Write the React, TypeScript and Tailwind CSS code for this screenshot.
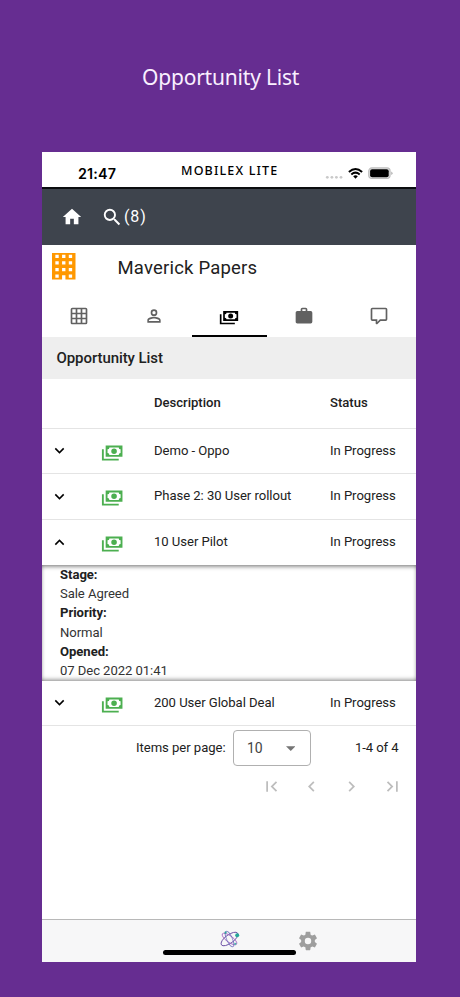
import React from "react";

const paths = {
  home: "M10,20V14H14V20H19V12H22L12,3L2,12H5V20H10Z",
  search:
    "M9.5,3A6.5,6.5 0 0,1 16,9.5C16,11.11 15.41,12.59 14.44,13.73L14.71,14H15.5L20.5,19L19,20.5L14,15.5V14.71L13.73,14.44C12.59,15.41 11.11,16 9.5,16A6.5,6.5 0 0,1 3,9.5A6.5,6.5 0 0,1 9.5,3M9.5,5C7,5 5,7 5,9.5C5,12 7,14 9.5,14C12,14 14,12 14,9.5C14,7 12,5 9.5,5Z",
  grid: "M10,4V8H14V4H10M16,4V8H20V4H16M16,10V14H20V10H16M16,16V20H20V16H16M14,20V16H10V20H14M8,20V16H4V20H8M8,14V10H4V14H8M8,8V4H4V8H8M10,14H14V10H10V14M4,2H20A2,2 0 0,1 22,4V20A2,2 0 0,1 20,22H4C2.92,22 2,21.1 2,20V4A2,2 0 0,1 4,2Z",
  account:
    "M12,4A4,4 0 0,1 16,8A4,4 0 0,1 12,12A4,4 0 0,1 8,8A4,4 0 0,1 12,4M12,6A2,2 0 0,0 10,8A2,2 0 0,0 12,10A2,2 0 0,0 14,8A2,2 0 0,0 12,6M12,13C14.67,13 20,14.33 20,17V20H4V17C4,14.33 9.33,13 12,13M12,14.9C9.03,14.9 5.9,16.36 5.9,17V18.1H18.1V17C18.1,16.36 14.97,14.9 12,14.9Z",
  cash: "M5,6H23V18H5V6M14,9A3,3 0 0,1 17,12A3,3 0 0,1 14,15A3,3 0 0,1 11,12A3,3 0 0,1 14,9M9,8A2,2 0 0,1 7,10V14A2,2 0 0,1 9,16H19A2,2 0 0,1 21,14V10A2,2 0 0,1 19,8H9M1,10H3V20H19V22H1V10Z",
  briefcase:
    "M10,2H14A2,2 0 0,1 16,4V6H20A2,2 0 0,1 22,8V19A2,2 0 0,1 20,21H4C2.89,21 2,20.1 2,19V8C2,6.89 2.89,6 4,6H8V4C8,2.89 8.89,2 10,2M14,6V4H10V6H14Z",
  comment:
    "M9,22A1,1 0 0,1 8,21V18H4A2,2 0 0,1 2,16V4C2,2.89 2.9,2 4,2H20A2,2 0 0,1 22,4V16A2,2 0 0,1 20,18H13.9L10.2,21.71C10,21.9 9.75,22 9.5,22V22H9M10,16V19.08L13.08,16H20V4H4V16H10Z",
  down: "M7.41,8.58L12,13.17L16.59,8.58L18,10L12,16L6,10L7.41,8.58Z",
  up: "M7.41,15.41L12,10.83L16.59,15.41L18,14L12,8L6,14L7.41,15.41Z",
  first: "M18.41,16.59L13.82,12L18.41,7.41L17,6L11,12L17,18L18.41,16.59M6,6H8V18H6V6Z",
  prev: "M15.41,16.58L10.83,12L15.41,7.41L14,6L8,12L14,18L15.41,16.58Z",
  next: "M8.59,16.58L13.17,12L8.59,7.41L10,6L16,12L10,18L8.59,16.58Z",
  last: "M5.59,7.41L10.18,12L5.59,16.59L7,18L13,12L7,6L5.59,7.41M16,6H18V18H16V6Z",
  cog: "M12,15.5A3.5,3.5 0 0,1 8.5,12A3.5,3.5 0 0,1 12,8.5A3.5,3.5 0 0,1 15.5,12A3.5,3.5 0 0,1 12,15.5M19.43,12.97C19.47,12.65 19.5,12.33 19.5,12C19.5,11.67 19.47,11.34 19.43,11L21.54,9.37C21.73,9.22 21.78,8.95 21.66,8.73L19.66,5.27C19.54,5.05 19.27,4.96 19.05,5.05L16.56,6.05C16.04,5.66 15.5,5.32 14.87,5.07L14.5,2.42C14.46,2.18 14.25,2 14,2H10C9.75,2 9.54,2.18 9.5,2.42L9.13,5.07C8.5,5.32 7.96,5.66 7.44,6.05L4.95,5.05C4.73,4.96 4.46,5.05 4.34,5.27L2.34,8.73C2.21,8.95 2.27,9.22 2.46,9.37L4.57,11C4.53,11.34 4.5,11.67 4.5,12C4.5,12.33 4.53,12.65 4.57,12.97L2.46,14.63C2.27,14.78 2.21,15.05 2.34,15.27L4.34,18.73C4.46,18.95 4.73,19.03 4.95,18.95L7.44,17.94C7.96,18.34 8.5,18.68 9.13,18.93L9.5,21.58C9.54,21.82 9.75,22 10,22H14C14.25,22 14.46,21.82 14.5,21.58L14.87,18.93C15.5,18.67 16.04,18.34 16.56,17.94L19.05,18.95C19.27,19.03 19.54,18.95 19.66,18.73L21.66,15.27C21.78,15.05 21.73,14.78 21.54,14.63L19.43,12.97Z",
};

type IconName = keyof typeof paths;

function Icon({ name, className }: { name: IconName; className: string }) {
  return (
    <svg viewBox="0 0 24 24" fill="currentColor" className={`shrink-0 ${className}`}>
      <path d={paths[name]} />
    </svg>
  );
}

function Building() {
  return (
    <svg viewBox="5 4 14 16" preserveAspectRatio="none" className="-mt-[2px] h-[26.5px] w-[23.5px] shrink-0 text-[#ff9800]" fill="currentColor">
      <path
        fillRule="evenodd"
        d="M5,4V20H11V17.5H13V20H19V4ZM7,5H9V7H7ZM11,5H13V7H11ZM15,5H17V7H15ZM7,9H9V11H7ZM11,9H13V11H11ZM15,9H17V11H15ZM7,13H9V15H7ZM11,13H13V15H11ZM15,13H17V15H15ZM7,17H9V19H7ZM15,17H17V19H15Z"
      />
    </svg>
  );
}

function StatusBar() {
  return (
    <div className="flex h-[35px] shrink-0 items-start bg-white text-black">
      <span className="ml-[36px] mt-[13px] w-[103px] font-['Inter'] text-[14.3px] font-semibold leading-[18px] tracking-[0.2px]">21:47</span>
      <span className="mt-[10px] w-[144px] whitespace-nowrap font-['Noto_Sans'] text-[12.5px] font-medium leading-[18px] tracking-[1.16px]">
        MOBILEX LITE
      </span>
      <svg viewBox="0 0 68 14" className="mt-[14px] h-[14px] w-[68px]">
        <g fill="#c9c9c9">
          <circle cx="2.3" cy="11.3" r="1.4" />
          <circle cx="6.9" cy="11.3" r="1.4" />
          <circle cx="11.4" cy="11.3" r="1.4" />
          <circle cx="16" cy="11.3" r="1.4" />
        </g>
        <g fill="none" stroke="#000" strokeWidth="2">
          <path d="M23.9 5.9Q30.5 .1 37.1 5.9" />
          <path d="M26.3 8.4Q30.5 4.9 34.7 8.4" />
        </g>
        <path d="M28.2 10.2Q30.5 8.5 32.8 10.2L30.5 12.7Z" />
        <rect x="43.7" y="1.9" width="21.4" height="10.6" rx="3.2" fill="#ddd" stroke="#bdbdbd" strokeWidth="1.1" />
        <rect x="45.1" y="3.2" width="18.6" height="8" rx="2" />
        <path d="M66.2 5.4Q67.6 6 67.6 7.2Q67.6 8.4 66.2 9Z" fill="#b5b5b5" />
      </svg>
    </div>
  );
}

const tabs: IconName[] = ["grid", "account", "cash", "briefcase", "comment"];

function Tabs() {
  return (
    <div className="flex h-[47px] w-[374.5px] shrink-0">
      {tabs.map((name) => (
        <div
          key={name}
          className={
            name === "cash"
              ? "flex flex-1 justify-center border-b-2 border-black pt-[16px] text-black"
              : "flex flex-1 justify-center border-b-2 border-transparent pt-[16px] text-[#616161]"
          }
        >
          <Icon name={name} className="h-5 w-5" />
        </div>
      ))}
    </div>
  );
}

function Row({ title, open }: { title: string; open?: boolean }) {
  return (
    <div
      className={
        open
          ? "flex h-[45.5px] shrink-0 items-center text-[13.1px] leading-5"
          : "flex h-[45.5px] shrink-0 items-center border-b border-[#e4e4e4] text-[13.1px] leading-5"
      }
    >
      <Icon name={open ? "up" : "down"} className="ml-[7.5px] h-[19px] w-[19px] text-black" />
      <Icon name="cash" className="ml-[32px] h-[22.4px] w-[22.4px] text-[#4caf50]" />
      <span className="ml-[31.1px] w-[176px] tracking-[-0.04px]">{title}</span>
      <span className="tracking-[-0.04px]">In Progress</span>
    </div>
  );
}

const details = [
  ["Stage:", "Sale Agreed"],
  ["Priority:", "Normal"],
  ["Opened:", "07 Dec 2022 01:41"],
];

function Details() {
  return (
    <div className="flex h-[115.5px] shrink-0 flex-col pl-[18px] text-[13.1px] leading-[19.2px] shadow-[inset_0_4px_5px_-3px_rgba(0,0,0,0.5),inset_0_-4px_5px_-3px_rgba(0,0,0,0.4),inset_0_0_4px_rgba(0,0,0,0.2)]">
      {details.map(([label, value]) => (
        <div key={label}>
          <div className="font-bold tracking-[-0.04px]">{label}</div>
          <div className="tracking-[-0.07px] text-[#333]">{value}</div>
        </div>
      ))}
    </div>
  );
}

function Pagination() {
  return (
    <div className="shrink-0">
      <div className="flex h-[44px] items-center text-[13.1px]">
        <span className="ml-[94px] w-[97px] whitespace-nowrap tracking-[-0.04px]">Items per page:</span>
        <div className="flex h-[36.5px] w-[78px] shrink-0 items-center rounded-[4px] border border-[#b0b0b0] pl-[13px]">
          <span className="w-[38.5px] text-[14px] text-[#444]">10</span>
          <svg viewBox="0 0 10 5" className="h-[5px] w-[9.5px] text-[#757575]" fill="currentColor">
            <path d="M0 0H10L5 5Z" />
          </svg>
        </div>
        <span className="ml-[44px] whitespace-nowrap tracking-[-0.1px]">1-4 of 4</span>
      </div>
      <div className="flex h-[33px] items-center gap-[19.4px] pl-[218.7px] text-[#bdbdbd]">
        <Icon name="first" className="h-[21px] w-[21px]" />
        <Icon name="prev" className="h-[21px] w-[21px]" />
        <Icon name="next" className="h-[21px] w-[21px]" />
        <Icon name="last" className="h-[21px] w-[21px]" />
      </div>
    </div>
  );
}

function Atom() {
  return (
    <svg viewBox="0 0 20 18" className="h-[18px] w-[20px]" fill="none" strokeWidth="0.9">
      <ellipse cx="9.5" cy="9" rx="10" ry="4.2" transform="rotate(-36 9.5 9)" stroke="#6b4fa3" />
      <ellipse cx="9.5" cy="9" rx="8.8" ry="3.2" transform="rotate(36 9.5 9)" stroke="#a86fc4" />
      <ellipse cx="9.5" cy="9" rx="8.4" ry="2.8" transform="rotate(66 9.5 9)" stroke="#5b5bb5" strokeOpacity="0.7" />
      <circle cx="17.2" cy="5.2" r="2" fill="#26a69a" />
      <circle cx="5.6" cy="2.6" r="1.1" fill="#26a69a" />
      <circle cx="15.3" cy="13.8" r="1.1" fill="#4db6ac" />
    </svg>
  );
}

export default function App() {
  return (
    <div className="flex h-[997px] w-[460px] flex-col overflow-hidden bg-[#662d91] font-['Roboto',sans-serif] text-[#212121]">
      <h1 className="flex h-[152px] shrink-0 items-start pl-[142px] pt-[63px] font-['Noto_Sans'] text-[21px] leading-[28px] tracking-[-0.2px] text-[#faf0ff]">
        Opportunity List
      </h1>
      <main className="ml-[42px] flex h-[810px] w-[374px] shrink-0 flex-col bg-white">
        <StatusBar />
        <div className="flex h-[57.5px] shrink-0 items-center border-t-2 border-[#0b0d10] bg-[#3e444d] text-white">
          <Icon name="home" className="ml-[19px] h-[22px] w-[22px]" />
          <Icon name="search" className="ml-[18px] h-[22.4px] w-[22.4px]" />
          <span className="ml-[0.5px] text-[16px] tracking-[0.9px]">(8)</span>
        </div>
        <div className="flex h-[45.5px] shrink-0 items-center pl-[10px]">
          <Building />
          <span className="ml-[42px] pt-[1px] text-[18.5px] leading-[22px] tracking-[0.2px]">Maverick Papers</span>
        </div>
        <Tabs />
        <div className="flex h-[42px] shrink-0 items-center bg-[#eeeeee] pl-[14.5px] text-[15px] font-medium tracking-[-0.08px]">Opportunity List</div>
        <div className="flex h-[49.5px] shrink-0 items-center border-b border-[#e4e4e4] pl-[112px] text-[13.1px] font-medium">
          <span className="w-[176px] tracking-[-0.02px]">Description</span>
          <span className="tracking-[-0.02px]">Status</span>
        </div>
        <Row title="Demo - Oppo" />
        <Row title="Phase 2: 30 User rollout" />
        <Row title="10 User Pilot" open />
        <Details />
        <Row title="200 User Global Deal" />
        <Pagination />
        <footer className="relative mt-auto flex h-[43px] shrink-0 border-t border-[#b8b8b8] bg-[#f7f7f8]">
          <div className="ml-[178px] mt-[10px]">
            <Atom />
          </div>
          <Icon name="cog" className="ml-[57px] mt-[10px] h-[22px] w-[22px] text-[#9e9e9e]" />
          <div className="absolute left-[120.5px] top-[30px] h-[4.5px] w-[133.5px] rounded-full bg-black" />
        </footer>
      </main>
    </div>
  );
}
